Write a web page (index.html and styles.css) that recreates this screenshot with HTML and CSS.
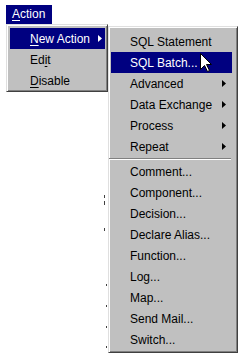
FILE: index.html
```html
<!DOCTYPE html>
<html>
<head>
<meta charset="utf-8">
<link rel="stylesheet" href="styles.css">
</head>
<body>
<div class="screen">
  <div class="menubar">
    <span class="bar-item active"><u>A</u>ction</span>
  </div>

  <div class="artifacts">
    <span class="dot" style="left:104px;top:195px;height:3px"></span>
    <span class="dot" style="left:104px;top:201px;height:4px"></span>
    <span class="dot" style="left:104px;top:228px;height:3px"></span>
    <span class="dot" style="left:106px;top:284px"></span>
    <span class="dot" style="left:106px;top:305px"></span>
    <span class="dot" style="left:106px;top:326px"></span>
    <span class="dot" style="left:106px;top:346px"></span>
  </div>

  <div class="menu menu-main">
    <div class="row active"><span class="label"><u>N</u>ew Action</span><svg class="arrow" width="4" height="7" viewBox="0 0 4 7"><path d="M0 0L4 3.5L0 7Z"/></svg></div>
    <div class="row"><span class="label">Ed<u>i</u>t</span></div>
    <div class="row"><span class="label"><u>D</u>isable</span></div>
  </div>

  <div class="menu menu-sub">
    <div class="row"><span class="label">SQL Statement</span></div>
    <div class="row active"><span class="label">SQL Batch...</span></div>
    <div class="row"><span class="label">Advanced</span><svg class="arrow" width="4" height="7" viewBox="0 0 4 7"><path d="M0 0L4 3.5L0 7Z"/></svg></div>
    <div class="row"><span class="label">Data Exchange</span><svg class="arrow" width="4" height="7" viewBox="0 0 4 7"><path d="M0 0L4 3.5L0 7Z"/></svg></div>
    <div class="row"><span class="label">Process</span><svg class="arrow" width="4" height="7" viewBox="0 0 4 7"><path d="M0 0L4 3.5L0 7Z"/></svg></div>
    <div class="row"><span class="label">Repeat</span><svg class="arrow" width="4" height="7" viewBox="0 0 4 7"><path d="M0 0L4 3.5L0 7Z"/></svg></div>
    <div class="sep"></div>
    <div class="row"><span class="label">Comment...</span></div>
    <div class="row"><span class="label">Component...</span></div>
    <div class="row"><span class="label">Decision...</span></div>
    <div class="row"><span class="label">Declare Alias...</span></div>
    <div class="row"><span class="label">Function...</span></div>
    <div class="row"><span class="label">Log...</span></div>
    <div class="row"><span class="label">Map...</span></div>
    <div class="row"><span class="label">Send Mail...</span></div>
    <div class="row"><span class="label">Switch...</span></div>
  </div>

  <svg class="cursor" width="13" height="20" viewBox="0 0 13 20">
    <path d="M0.5 0.5L0.5 16.5L4.5 12.5L7.5 18.5L9.5 17.5L6.5 11.5L11.5 11.5Z" fill="#fff" stroke="#000" stroke-width="1"/>
  </svg>
</div>
</body>
</html>
```

FILE: styles.css
```css
html, body {
  margin: 0;
  padding: 0;
  background: #ffffff;
}

.screen {
  position: relative;
  width: 239px;
  height: 354px;
  overflow: hidden;
  font-family: "Liberation Sans", Arial, sans-serif;
  font-size: 12px;
  color: #000;
}

.menubar {
  padding: 5px 0 0 6px;
  height: 19px;
}

.bar-item {
  display: inline-block;
  height: 19px;
  line-height: 19px;
  padding: 0 7px 0 6px;
}

.bar-item.active {
  background: #000080;
  color: #fff;
}

u {
  text-decoration: underline;
  text-underline-offset: 2px;
}

.menu {
  position: absolute;
  background: #c0c0c0;
  border-style: solid;
  border-width: 1px;
  border-color: #dfdfdf #404040 #404040 #dfdfdf;
  box-shadow: inset 1px 1px 0 #ffffff, inset -1px -1px 0 #808080;
  box-sizing: border-box;
}

.menu-main {
  left: 6px;
  top: 24px;
  width: 102px;
  height: 68px;
  padding: 3px 2px 0 3px;
}

.menu-sub {
  left: 108px;
  top: 26px;
  width: 130px;
  height: 327px;
  padding: 4px 5px 0 2px;
}

.row {
  display: flex;
  align-items: center;
  height: 21px;
  padding-left: 20px;
  padding-right: 3px;
  white-space: nowrap;
}

.menu-sub .row {
  padding-left: 19px;
  padding-right: 6px;
}

.row .label {
  flex: 1;
}

.row.active {
  background: #000080;
  color: #fff;
}

.row.active .arrow path {
  fill: #fff;
}

.arrow {
  display: block;
  flex: none;
}

.arrow path {
  fill: #000;
}

.sep {
  height: 4px;
  margin-left: -2px;
  margin-right: 1px;
  box-sizing: border-box;
  border-top: 1px solid #808080;
  border-bottom: 1px solid #ffffff;
  margin-top: 0;
  transform: translateY(1px);
  background: transparent;
  height: 2px;
  margin-bottom: 2px;
}

.artifacts .dot {
  position: absolute;
  width: 1px;
  height: 2px;
  background: #404040;
}

.cursor {
  position: absolute;
  left: 200px;
  top: 53px;
}
```
